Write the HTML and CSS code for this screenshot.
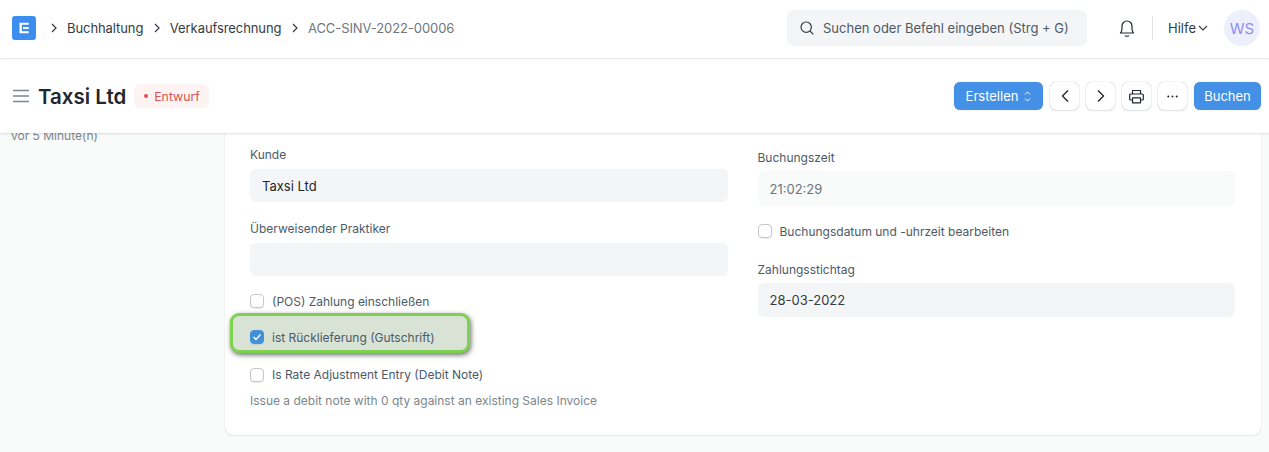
FILE: index.html
```html
<!DOCTYPE html>
<html lang="de">
<head>
<meta charset="utf-8">
<title>Taxsi Ltd</title>
<link rel="stylesheet" href="styles.css">
</head>
<body>
<header class="navbar">
  <div class="logo"><svg width="24" height="24" viewBox="0 0 24 24"><rect width="24" height="24" rx="3" fill="#3b8ef0"/><path d="M7.500 6.800h9.200v2H7.500zM7.500 6.800h2.300v10.400H7.500zM7.500 15.200h9.200v2H7.500zM11 11h5.700v2H11z" fill="#fff"/></svg></div>
  <nav class="crumbs">
    <svg class="chev" width="8" height="10" viewBox="0 0 8 10"><path d="M2 1l4 4-4 4" fill="none" stroke="#333c44" stroke-width="1.200"/></svg>
    <span class="crumb">Buchhaltung</span>
    <svg class="chev" width="8" height="10" viewBox="0 0 8 10"><path d="M2 1l4 4-4 4" fill="none" stroke="#333c44" stroke-width="1.200"/></svg>
    <span class="crumb">Verkaufsrechnung</span>
    <svg class="chev" width="8" height="10" viewBox="0 0 8 10"><path d="M2 1l4 4-4 4" fill="none" stroke="#333c44" stroke-width="1.200"/></svg>
    <span class="crumb current">ACC-SINV-2022-00006</span>
  </nav>
  <div class="search">
    <svg width="16" height="16" viewBox="0 0 16 16"><circle cx="7.200" cy="7.200" r="5.200" fill="none" stroke="#333c44" stroke-width="1.200"/><path d="M11 11l3.300 3.300" stroke="#333c44" stroke-width="1.200"/></svg>
    <span>Suchen oder Befehl eingeben (Strg + G)</span>
  </div>
  <svg class="bell" width="18" height="20" viewBox="0 0 18 20"><path d="M2.500 15c1-1.200 1.500-2.300 1.500-4.500V8a5 5 0 0 1 10 0v2.500c0 2.200.5 3.300 1.500 4.500z" fill="none" stroke="#20272e" stroke-width="1.200" stroke-linejoin="round"/><path d="M7 17.500c.5 1 3.500 1 4 0" fill="none" stroke="#20272e" stroke-width="1.200"/></svg>
  <div class="divider"></div>
  <div class="help">Hilfe <svg width="10" height="6" viewBox="0 0 10 6"><path d="M1 1l4 4 4-4" fill="none" stroke="#333c44" stroke-width="1.100"/></svg></div>
  <div class="avatar">WS</div>
</header>

<section class="pagehead">
  <svg class="menu" width="16" height="14" viewBox="0 0 16 14"><path d="M0 1.500h16M0 7h16M0 12.500h16" stroke="#7c858d" stroke-width="1.300"/></svg>
  <h1 class="title">Taxsi Ltd</h1>
  <span class="status"><i class="dot"></i>Entwurf</span>
  <div class="actions">
    <button class="btn primary create">Erstellen <svg width="7" height="11" viewBox="0 0 7 11"><path d="M1 3.500l2.500-2.500 2.500 2.500M1 7.500l2.500 2.500 2.500-2.500" fill="none" stroke="#fff" stroke-width="1"/></svg></button>
    <button class="btn icon"><svg width="10" height="14" viewBox="0 0 10 14"><path d="M8 1.500L2.500 7 8 12.500" fill="none" stroke="#20272e" stroke-width="1.400"/></svg></button>
    <button class="btn icon"><svg width="10" height="14" viewBox="0 0 10 14"><path d="M2 1.500L7.500 7 2 12.500" fill="none" stroke="#20272e" stroke-width="1.400"/></svg></button>
    <button class="btn icon"><svg width="15" height="15" viewBox="0 0 15 15"><path d="M3.500 5V1.500h8V5M3.500 11H1.500a.8.8 0 0 1-.8-.8V6a1 1 0 0 1 1-1h11.600a1 1 0 0 1 1 1v4.200a.8.8 0 0 1-.8.8h-2M3.500 8.800h8v5h-8z" fill="none" stroke="#20272e" stroke-width="1.200" stroke-linejoin="round"/></svg></button>
    <button class="btn icon"><svg width="11" height="3" viewBox="0 0 11 3"><circle cx="1.300" cy="1.500" r="1" fill="#20272e"/><circle cx="5.500" cy="1.500" r="1" fill="#20272e"/><circle cx="9.700" cy="1.500" r="1" fill="#20272e"/></svg></button>
    <button class="btn primary book">Buchen</button>
  </div>
</section>

<main class="content">
  <aside class="sidebar"><p class="modified">vor 5 Minute(n)</p></aside>
  <div class="card">
    <div class="col left">
      <label class="label first">Kunde</label>
      <div class="input strong">Taxsi Ltd</div>
      <label class="label second">Überweisender Praktiker</label>
      <div class="input strong"></div>
      <div class="check c1"><span class="box"></span><span>(POS) Zahlung einschließen</span></div>
      <div class="check highlight"><span class="box on"><svg width="10" height="8" viewBox="0 0 10 8"><path d="M1.500 4l2.500 2.500 4.500-5" fill="none" stroke="#fff" stroke-width="1.300"/></svg></span><span>ist Rücklieferung (Gutschrift)</span></div>
      <div class="check c3"><span class="box"></span><span>Is Rate Adjustment Entry (Debit Note)</span></div>
      <p class="desc">Issue a debit note with 0 qty against an existing Sales Invoice</p>
    </div>
    <div class="col right">
      <label class="label rfirst">Buchungszeit</label>
      <div class="input readonly">21:02:29</div>
      <div class="check rc"><span class="box"></span><span>Buchungsdatum und -uhrzeit bearbeiten</span></div>
      <label class="label rsecond">Zahlungsstichtag</label>
      <div class="input date">28-03-2022</div>
    </div>
  </div>
</main>
</body>
</html>
```

FILE: styles.css
```css
* { box-sizing: border-box; }
html, body { margin: 0; height: 452px; overflow: hidden; }
body { font-family: Inter, "Liberation Sans", sans-serif; background: #f9fafa; color: #333c44; font-size: 13px; }

.navbar { height: 59px; background: #fff; display: flex; align-items: center; padding: 0 9px 2px 12px; border-bottom: 1px solid #e8e9ea; box-shadow: 0 1px 2px rgba(0,0,0,.04); position: relative; z-index: 3; }
.logo { width: 24px; height: 24px; line-height: 0; margin-right: 14px; }
.crumbs { display: flex; align-items: center; font-size: 13px; letter-spacing: -.08px; }
.chev { margin-right: 9px; }
.crumb { margin-right: 9.500px; color: #333c44; }
.crumb.current { color: #6e7780; }
.search { margin-left: auto; width: 300px; height: 36px; background: #f4f5f6; border-radius: 7px; display: flex; align-items: center; padding-left: 12px; gap: 8px; color: #4c5a67; font-size: 13px; }
.bell { margin-left: 31px; }
.divider { width: 1px; height: 24px; background: #dfe1e3; margin-left: 16px; }
.help { margin-left: 15px; display: flex; align-items: center; gap: 2px; color: #333c44; font-size: 13px; }
.avatar { width: 36px; height: 36px; margin-left: 16px; border-radius: 50%; background: #eeeffc; color: #8d8ff0; display: flex; align-items: center; justify-content: center; font-size: 15px; }

.pagehead { height: 74px; background: #fff; display: flex; align-items: center; padding: 0 8px 0 13px; box-shadow: 0 1px 2px rgba(0,0,0,.12); position: relative; z-index: 2; }
.menu { margin-right: 9px; }
.title { margin: 0; font-size: 20.500px; font-weight: 600; color: #1f272e; }
.status { margin-left: 8px; height: 24px; padding: 0 9px 0 10px; background: #fdf3f3; border-radius: 6px; color: #d9534f; font-size: 12.300px; display: flex; align-items: center; gap: 6px; }
.dot { width: 4px; height: 4px; border-radius: 50%; background: #d9534f; }
.actions { margin-left: auto; display: flex; gap: 7px; }
.btn { height: 28px; border: 0; border-radius: 6px; font-family: inherit; font-size: 13px; display: flex; align-items: center; justify-content: center; padding: 0; }
.primary { background: #4390e6; color: #fff; box-shadow: 0 0 1px rgba(0,0,0,.3); }
.create { width: 89px; gap: 6px; }
.book { width: 67px; }
.icon { width: 29px; background: #fff; box-shadow: 0 0 1px rgba(0,0,0,.35), 0 1px 2px rgba(0,0,0,.1); }

.content { display: flex; align-items: flex-start; height: 319px; }
.sidebar { width: 225px; flex: none; padding-left: 11px; }
.modified { margin: -5px 0 0; color: #7c858d; font-size: 12px; }
.card { width: 1036px; height: 302px; background: #fff; border-radius: 0 0 8px 8px; box-shadow: 0 0 1px rgba(0,0,0,.2), 0 1px 2px rgba(0,0,0,.06); padding: 0 25px; display: flex; gap: 30px; }
.col { width: 477.500px; display: flex; flex-direction: column; }

.label { display: block; font-size: 12px; line-height: 16px; color: #4c5a67; }
.first { margin-top: 14px; margin-bottom: 6px; }
.second { margin-top: 19px; margin-bottom: 6px; }
.rfirst { margin-top: 17px; margin-bottom: 5px; }
.rsecond { margin-top: 21px; margin-bottom: 5px; }
.input { background: #f4f5f6; border-radius: 6px; padding: 0 12px; display: flex; align-items: center; font-size: 13px; color: #333c44; height: 33px; }
.strong { color: #1f272e; }
.readonly { height: 35px; background: #f9fafa; color: #6b7580; }
.date { height: 34px; }

.check { display: flex; align-items: center; gap: 8px; font-size: 12px; color: #4c5a67; height: 20px; }
.c1 { margin-top: 15px; }
.c3 { margin-top: 11.500px; }
.rc { margin-top: 15px; }
.box { width: 14px; height: 14px; border-radius: 4px; background: #fff; border: 1px solid #c4c8cd; box-shadow: 0 1px 1px rgba(0,0,0,.08); display: flex; align-items: center; justify-content: center; flex: none; }
.box.on { background: #4191d8; border-color: #4191d8; }
.highlight { margin: 2px 0 0 -20px; width: 240px; height: 40px; padding: 8px 0 0 17px; background: #d8e2d5; border: 3px solid #7fd24f; border-radius: 9px; box-shadow: 1px 2px 5px rgba(40,50,40,.7); }
.desc { margin: 8px 0 0; font-size: 12px; line-height: 16px; color: #7c858d; }
```
